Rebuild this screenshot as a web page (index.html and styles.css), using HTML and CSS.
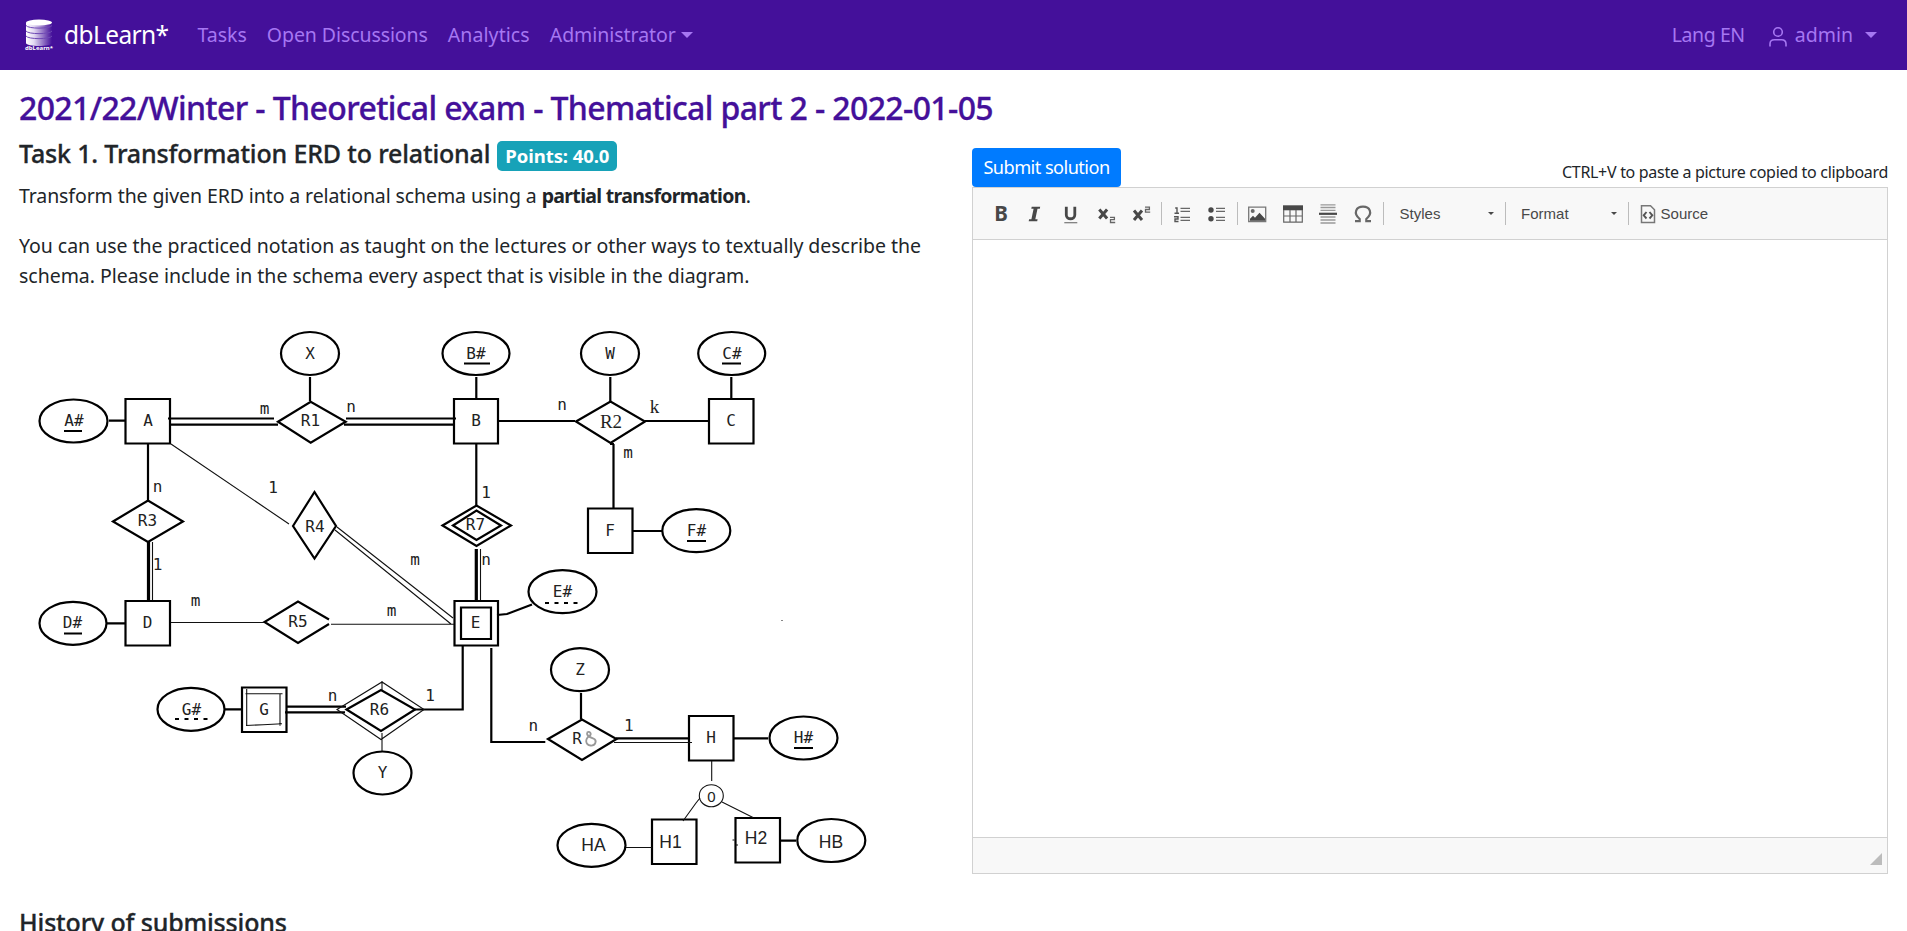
FILE: index.html
```html
<!DOCTYPE html>
<html lang="en">
<head>
<meta charset="utf-8">
<title>dbLearn*</title>
<link rel="stylesheet" href="styles.css">
</head>
<body>
<nav class="navbar">
  <a class="brand"><svg class="logo" width="30" height="34" viewBox="0 0 30 34">
    <defs><linearGradient id="cyl"><stop offset="0" stop-color="#fff"/><stop offset=".3" stop-color="#e3daf2"/><stop offset="1" stop-color="#44109a"/></linearGradient></defs>
    <path d="M2 5v20c0 4 26 4 26 0V5z" fill="url(#cyl)"/>
    <path d="M2 7.500c2 3.500 24 3.500 26 0M2 13c2 3.500 24 3.500 26 0M2 18c2 3.500 24 3.500 26 0" fill="none" stroke="#6f4ab5" stroke-width="1"/>
    <ellipse cx="15" cy="4.500" rx="13" ry="3" fill="#fff"/>
    <text x="1" y="32" class="logo-text" textLength="28">dbLearn*</text></svg><span class="brand-name">dbLearn*</span></a>
  <span class="nav-tasks">Tasks</span>
  <span class="nav-disc">Open Discussions</span>
  <span class="nav-ana">Analytics</span>
  <span class="nav-adm">Administrator</span><i class="caret"></i>
  <span class="spacer"></span>
  <span class="nav-lang">Lang EN</span>
  <svg class="person" width="20" height="22" viewBox="0 0 20 22" fill="none" stroke="#a677f2" stroke-width="1.600"><circle cx="10" cy="6" r="4.300"/><path d="M2 20.500v-2.500c0-3 1.500-4.300 4.500-4.300h7c3 0 4.500 1.300 4.500 4.300v2.500"/></svg>
  <span class="nav-admin">admin</span><i class="caret caret-user"></i>
</nav>
<main class="page">
  <h1>2021/22/Winter - Theoretical exam - Thematical part 2 - 2022-01-05</h1>
  <div class="columns">
    <section class="left">
      <h2><span class="task">Task 1. Transformation ERD to relational</span><span class="badge">Points: 40.0</span></h2>
      <p><span class="intro">Transform the given ERD into a relational schema using a </span><b>partial transformation</b>.</p>
      <p class="detail">You can use the practiced notation as taught on the lectures or other ways to textually describe the<br>schema. Please include in the schema every aspect that is visible in the diagram.</p>
      <svg class="erd" width="871" height="590" viewBox="19 290 871 590">
        <g class="thick">
          <ellipse cx="73.500" cy="421" rx="34" ry="21.500"/><ellipse cx="310" cy="353.500" rx="29" ry="21.500"/>
          <ellipse cx="476" cy="353.500" rx="33.500" ry="21.500"/><ellipse cx="610" cy="353.500" rx="29" ry="21.500"/>
          <ellipse cx="731.700" cy="353.500" rx="33.500" ry="21.500"/><ellipse cx="696.300" cy="530.700" rx="34" ry="21.500"/>
          <ellipse cx="562.500" cy="591.700" rx="34" ry="21.500"/><ellipse cx="73" cy="623.300" rx="33.500" ry="21.500"/>
          <ellipse cx="191" cy="709.300" rx="33.500" ry="21.500"/><ellipse cx="382.500" cy="773" rx="29" ry="21.500"/>
          <ellipse cx="580" cy="669.700" rx="29" ry="21.500"/><ellipse cx="803.500" cy="738" rx="34" ry="21.500"/>
          <ellipse cx="591.500" cy="845.300" rx="34" ry="21.500"/><ellipse cx="831.300" cy="840.500" rx="34" ry="21.500"/>
          <path d="M125.500 399h44.500v44.500h-44.500zM454 399h44v44.500h-44zM709 399h44.500v44.500h-44.500zM588 508.500h44.500v44.500h-44.500zM125.500 601h44.500v44.500h-44.500zM454.500 601h43.500v44.500h-43.500zM461 607.500h30v31.500h-30zM242 687.500h44.500v44.500h-44.500zM689 716h44.500v44.500h-44.500zM652 819.500h44.500v44.500h-44.500zM735.500 818h44.500v44.500h-44.500z"/>
          <path d="M278 421.700l32.700-20 35 20-35 21zM576 421.500l34.500-20 34.500 20-34.500 21.500zM113 521.500l35-21 35 21-35 20.500zM293 526l21.500-34 21.500 34-21.500 32.500zM442.500 525.500l34-20 34.500 20-34.500 20.500zM453 525.500l23.500-15 24.500 15-24.500 14.500zM329 619.500l-31-18-33.500 20.500 33.500 21 31-19M346.500 709.500l34.500-19.500 34 19.500-34 21.500zM548 739l34-19.500 34.500 19.500-34.500 21z"/>
          <path d="M109 420.700h16M310 377v24M476.300 377v22M610.300 377v24M731.300 377v22M168 418.500h106M171 424.700h107M346 418.500h110M344 424.700h110M498 421h77M645 421h64M613.500 444v65M610 444h4M633 531h29M148 444v57M476.300 444v61M497 615l10-1 25-9.500M106 623.300h19M225 709.300h17M286 706.700h60M285 712.300h60M415 709.500h47.700v-64M491.300 648v94h54M581 693v26M616 738.300h73M734 738.300h34M780 840.700h16"/>
          <path d="M64 431h18M464 363.500h26M722 363.500h19M687 541h19M64 633.500h18M794 748h19"/>
          <path d="M545 603h34M175 719h34" stroke-dasharray="4 5.500"/>
        </g>
        <path class="heavy" d="M148.500 542v59M476.300 549v51"/>
        <path class="thin" d="M152.500 542v58M480.500 549v51M171 444l118 80M337 527l116 91M335 530l116 94M171 622.500h93M331 624.200h123M337 709.500l45-27.500 42 27.500-43 30zM382 733v18M382 681v9M246.700 689v37M245.500 693.700h37M280 693.700v32M246 725.500l17-.8 19-1M614 742.500h78M711.700 761v20M700 798l-4 5-13 18M722 802l31 15.500M626 847.500h26"/>
        <ellipse class="thin" cx="711.300" cy="795.700" rx="12" ry="11"/>
        <path class="doodle" d="M587 732.500c3-2 5 1.500 2.500 3.500-5 3-4 9 1 9.500 5 .5 7-5 3-7-3-1-7-2-6.500-6"/>
        <path class="thin" d="M732.500 840h2M736 845h2M781.500 620.500h1"/>
        <g class="lbl">
          <text x="74" y="426">A#</text><text x="148" y="426">A</text><text x="310" y="358.500">X</text><text x="310.500" y="426">R1</text><text x="264.500" y="413.500">m</text><text x="351" y="412">n</text>
          <text x="476" y="358.500">B#</text><text x="476" y="426">B</text><text x="562" y="409.700">n</text><text x="610" y="358.500">W</text><text x="732" y="358.500">C#</text><text x="731" y="426">C</text><text x="628" y="458">m</text>
          <text x="610" y="536">F</text><text x="696.500" y="536">F#</text><text x="157.500" y="492">n</text><text x="147.500" y="526">R3</text><text x="157.500" y="570">1</text><text x="273" y="493">1</text><text x="315" y="532.300">R4</text>
          <text x="415" y="564.700">m</text><text x="195.500" y="605.700">m</text><text x="391.500" y="616">m</text><text x="486" y="498">1</text><text x="475.500" y="529.700">R7</text><text x="486" y="564.700">n</text><text x="562.500" y="597">E#</text><text x="475.500" y="628.300">E</text>
          <text x="147.500" y="628.300">D</text><text x="72.500" y="628.300">D#</text><text x="298" y="627">R5</text><text x="191.500" y="714.500">G#</text><text x="264" y="714.500">G</text><text x="332.500" y="701">n</text><text x="430" y="701">1</text><text x="379.500" y="714.500">R6</text><text x="382.500" y="778">Y</text>
          <text x="580" y="674.700">Z</text><text x="577" y="744">R</text><text x="533.300" y="730.500">n</text><text x="628.700" y="731">1</text><text x="711" y="743.300">H</text><text x="803.500" y="743">H#</text>
        </g>
        <g class="lbl serif"><text x="611" y="428">R2</text><text x="654.500" y="413.300">k</text></g>
        <g class="lbl sans"><text x="593.500" y="850.700">HA</text><text x="670.500" y="847.700">H1</text><text x="756" y="844">H2</text><text x="831" y="848">HB</text><text x="711.300" y="801.500" class="o">0</text></g>
      </svg>
    </section>
    <section class="right">
      <div class="actions"><button class="submit">Submit solution</button><span class="hint">CTRL+V to paste a picture copied to clipboard</span></div>
      <div class="editor">
        <div class="toolbar">
          <span class="tool"><svg viewBox="0 0 20 20"><text x="3.300" y="17.300" class="g" font-size="20.500">B</text></svg></span>
          <span class="tool"><svg viewBox="0 0 20 20"><path d="M5.700 2.700h8.500l-.4 2h-2.300l-2.200 10.600h2.300l-.4 2H2.700l.4-2h2.300l2.200-10.600H5.300z" fill="#484848"/></svg></span>
          <span class="tool"><svg viewBox="0 0 20 20"><path d="M5.300 2.800v8.200c0 5 8.500 5 8.500 0V2.800" fill="none" stroke="#484848" stroke-width="2.800"/><path d="M3.300 18.700h13" stroke="#777" stroke-width="1.200"/></svg></span>
          <span class="tool"><svg viewBox="0 0 20 20"><path d="M2.300 5.500l7.800 9M10.100 5.500l-7.800 9" stroke="#484848" stroke-width="3"/><path d="M13 13.300h4.400v2.400h-3.900v2.800h4.700" fill="none" stroke="#666" stroke-width="1.300"/></svg></span>
          <span class="tool"><svg viewBox="0 0 20 20"><path d="M2 6.500l8 9.500M10 6.500L2 16" stroke="#484848" stroke-width="3"/><path d="M13 3.200h4.400v2.300h-3.900v2.700h4.700" fill="none" stroke="#666" stroke-width="1.300"/></svg></span>
          <i class="sep"></i>
          <span class="tool"><svg viewBox="0 0 20 20"><path d="M3.200 4h1.800v5.500M2.500 9.300h4.500M2 12.800h4v2.200H3v2.500h3.500" fill="none" stroke="#555" stroke-width="1.400"/><path d="M8.500 4.300h9.500M8.500 7.300h9.500M8.500 13.300h9.500M8.500 16.300h9.500" stroke="#686868" stroke-width="1.300"/></svg></span>
          <span class="tool"><svg viewBox="0 0 20 20"><circle cx="4" cy="6" r="2.700" fill="#484848"/><circle cx="4" cy="14.800" r="2.700" fill="#484848"/><path d="M9 4.300h9M9 7.300h9M9 13.300h9M9 16.300h9" stroke="#686868" stroke-width="1.300"/></svg></span>
          <i class="sep"></i>
          <span class="tool"><svg viewBox="0 0 20 20"><path d="M1.700 3.200h17v14.300h-17z" fill="none" stroke="#777" stroke-width="1.300"/><circle cx="5.700" cy="7" r="2" fill="#686868"/><path d="M3 16.700v-2l3-3 2 2 4.500-5 5.500 6v2z" fill="#484848"/></svg></span>
          <span class="tool"><svg viewBox="0 0 20 20"><path d="M0 1.300h20v5H0z" fill="#484848"/><path d="M.7 6v12.200h18.600V6M.7 12h18.600M7 6v12M13 6v12" fill="none" stroke="#666" stroke-width="1.200"/></svg></span>
          <span class="tool"><svg viewBox="0 0 20 20"><path d="M2.500.8h15M2.500 3.500h15M2.500 6.300h15M2.500 13h15M2.500 16h15M2.500 19h15" stroke="#999" stroke-width="1.300"/><path d="M1 9.800h18" stroke="#484848" stroke-width="2.200"/></svg></span>
          <span class="tool"><svg viewBox="0 0 20 20"><path d="M2 17.200h4.700v-2.200c-7-6-3.500-12.300 3.300-12.300s10.300 6.300 3.300 12.300v2.200h4.700" fill="none" stroke="#686868" stroke-width="2.200"/></svg></span>
          <i class="sep"></i>
          <span class="combo combo-styles">Styles<i class="tri"></i></span>
          <i class="sep"></i>
          <span class="combo">Format<i class="tri"></i></span>
          <i class="sep"></i>
          <span class="source"><svg width="16" height="20" viewBox="0 0 16 20"><path d="M1.500 1.700h9l4 4v12.800h-13z" fill="none" stroke="#777" stroke-width="1.500"/><path d="M6.500 8l-2.800 3.300 2.800 3.200M9.500 8l2.800 3.300-2.800 3.200" fill="none" stroke="#555" stroke-width="1.900"/></svg>Source</span>
        </div>
        <div class="content"></div>
        <div class="footer"><svg width="12" height="12"><path d="M12 0v12H0z" fill="#bcbcbc"/></svg></div>
      </div>
    </section>
  </div>
  <h2 class="history">History of submissions</h2>
</main>
</body>
</html>
```
FILE: styles.css
```css
* { box-sizing: border-box; }
body { margin: 0; height: 931px; overflow: hidden; background: #fff; color: #212529; font: 19.5px/30px "Noto Sans", sans-serif; }
.navbar { display: flex; align-items: center; height: 70px; padding: 0 30px 0 24px; background: #44109a; color: #a677f2; white-space: nowrap; }
.brand { display: flex; align-items: center; color: #fff; gap: 10px; margin-right: 29px; }
.brand-name { font-size: 24.5px; letter-spacing: -.6px; }
.logo-text { font: bold 6px "Noto Sans", sans-serif; fill: #fff; }
.nav-tasks, .nav-disc, .nav-ana { margin-right: 20px; }
.nav-disc { letter-spacing: -.08px; }
.nav-ana { letter-spacing: .08px; }
.nav-adm { letter-spacing: -.05px; }
.nav-lang { letter-spacing: -.42px; }
.caret { border: 6px solid transparent; border-top-color: currentColor; border-bottom: 0; margin-left: 5px; }
.caret-user { margin-left: 12px; }
.spacer { flex: 1; }
.person { margin: 3px 7px 0 23px; }
.page { padding: 18px 19px 0; }
h1 { margin: 0; font-size: 32px; line-height: 40px; font-weight: 500; letter-spacing: -.628px; color: #44109a; -webkit-text-stroke: .3px #44109a; }
.columns { display: flex; justify-content: space-between; }
.left { width: 915px; padding-top: 10px; }
.right { width: 916px; padding-top: 20px; }
h2 { margin: 0; display: flex; align-items: baseline; gap: 7px; font-size: 25px; line-height: 30px; font-weight: 500; }
.task, .history { letter-spacing: -.16px; -webkit-text-stroke: .3px #212529; }
.badge { height: 30px; padding: 0 8px; border-radius: 5px; background: #17a2b8; color: #fff; font-size: 18.5px; font-weight: 700; letter-spacing: -.074px; }
p { margin: 10px 0 20px; }
.intro { letter-spacing: -.1px; }
p b { letter-spacing: -.673px; }
.detail { margin: 0 0 -1px; letter-spacing: -.03px; white-space: nowrap; }
.erd { display: block; }
.erd .thick { fill: none; stroke: #000; stroke-width: 2.2; }
.erd .heavy { fill: none; stroke: #000; stroke-width: 3.2; }
.erd .thin { fill: none; stroke: #111; stroke-width: 1.1; }
.erd .doodle { fill: none; stroke: #999; stroke-width: 1.8; }
.lbl { font: 16px "DejaVu Sans Mono", monospace; text-anchor: middle; fill: #222; }
.lbl.serif { font: 19px "Liberation Serif", serif; }
.lbl.sans { font: 17.5px "Liberation Sans", sans-serif; }
.lbl .o { font-size: 15px; }
.actions { display: flex; justify-content: space-between; height: 39px; }
.submit { width: 149px; height: 39px; padding: 0; border: 0; border-radius: 4px; background: #007bff; color: #fff; font: 18.2px/36px "Noto Sans", sans-serif; letter-spacing: -.56px; padding-bottom: 2px; }
.hint { font-size: 16px; line-height: 48px; letter-spacing: -.302px; }
.editor { border: 1px solid #d1d1d1; height: 687px; display: flex; flex-direction: column; }
.toolbar { height: 52px; display: flex; align-items: center; padding-left: 10.5px; background: #f8f8f8; border-bottom: 1px solid #d1d1d1; color: #484848; font: 15px/20px "Liberation Sans", sans-serif; }
.tool { width: 35.2px; display: flex; justify-content: center; }
.tool svg { width: 20px; height: 20px; }
.tool .g { font-family: "Noto Sans", sans-serif; font-weight: 700; fill: #484848; }
.sep { width: 1px; height: 23px; margin: 0 2px; background: #bcbcbc; }
.combo { display: flex; align-items: center; justify-content: space-between; width: 117.5px; padding: 0 9px 0 13px; }
.combo-styles { padding-left: 14px; }
.tri { border: 3px solid transparent; border-top-color: #484848; border-bottom: 0; }
.source { display: flex; align-items: center; gap: 5px; padding-left: 9px; }
.content { flex: 1; }
.footer { height: 36px; background: #f8f8f8; border-top: 1px solid #d1d1d1; display: flex; justify-content: flex-end; padding: 15px 5px 0 0; }
.history { margin-top: 27px; }
```
